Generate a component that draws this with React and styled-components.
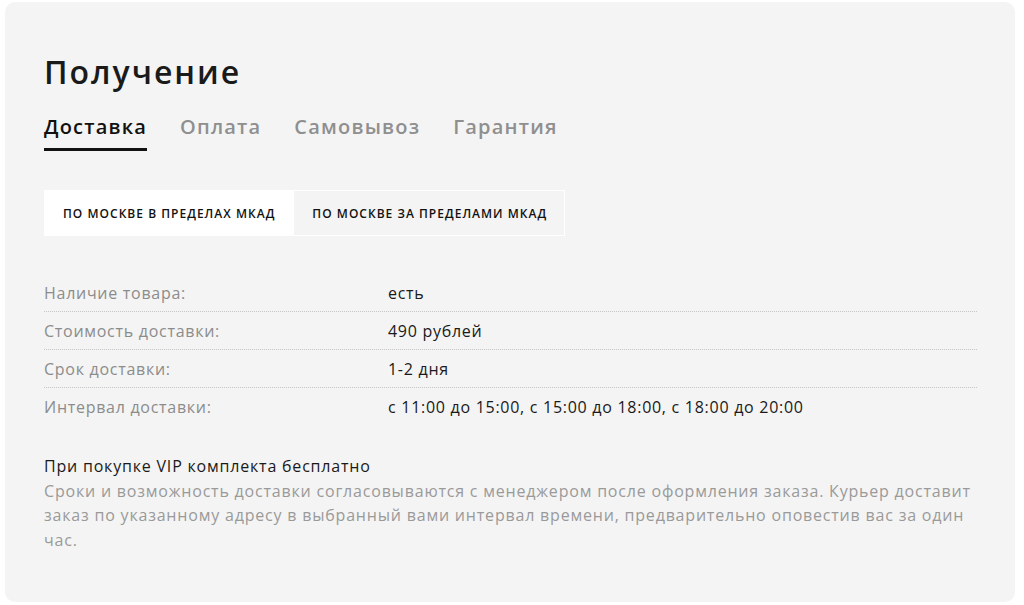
import React, { useState } from "react";
import styled, { createGlobalStyle } from "styled-components";

const Global = createGlobalStyle`
  html, body { margin: 0; padding: 0; background: #fff; }
  body { font-family: "Open Sans", "Noto Sans", sans-serif; -webkit-font-smoothing: antialiased; }
  * { box-sizing: border-box; }
`;

const Page = styled.div`
  padding: 2px 9px 3px 5px;
`;

const Card = styled.section`
  background: #f4f4f4;
  border-radius: 10px;
  height: 600px;
  padding: 44px 38px 0 39px;
`;

const Title = styled.h2`
  margin: 0;
  font-size: 32px;
  font-weight: 600;
  line-height: 52px;
  color: #1a1a1a;
  letter-spacing: 2px;
`;

const Tabs = styled.nav`
  display: flex;
  gap: 33px;
  margin-top: 15px;
`;

const Tab = styled.button`
  border: 0;
  background: none;
  padding: 0 0 7px;
  font-family: inherit;
  font-size: 20px;
  font-weight: 600;
  line-height: 28px;
  letter-spacing: 1.2px;
  color: ${(p) => (p.$active ? "#111" : "#8f8f8f")};
  border-bottom: 3px solid ${(p) => (p.$active ? "#111" : "transparent")};
  cursor: pointer;
`;

const Zones = styled.div`
  display: flex;
  margin-top: 39px;
`;

const Zone = styled.button`
  height: 46px;
  padding: 0 17px 0 18px;
  border: 1px solid #fff;
  background: ${(p) => (p.$active ? "#fff" : "transparent")};
  font-family: inherit;
  font-size: 12px;
  font-weight: 600;
  letter-spacing: 1.02px;
  text-transform: uppercase;
  color: #111;
  cursor: pointer;
`;

const Table = styled.div`
  margin-top: 38px;
`;

const Row = styled.div`
  display: grid;
  grid-template-columns: 344px 1fr;
  height: 38px;
  align-items: center;
  font-size: 16px;
  line-height: 22px;
  letter-spacing: 0.72px;
  border-bottom: 1px dotted ${(p) => (p.$last ? "transparent" : "#c6c6c6")};
`;

const Label = styled.span`
  color: #8c8c8c;
`;

const Value = styled.span`
  color: #1a1a1a;
`;

const Note = styled.div`
  margin-top: 28px;
  font-size: 16px;
  line-height: 24.5px;
  letter-spacing: 0.8px;
`;

const NoteTitle = styled.div`
  color: #1a1a1a;
`;

const NoteText = styled.p`
  margin: 0;
  color: #9a9a9a;
`;

const rows = [
  ["Наличие товара:", "есть"],
  ["Стоимость доставки:", "490 рублей"],
  ["Срок доставки:", "1-2 дня"],
  ["Интервал доставки:", "с 11:00 до 15:00, с 15:00 до 18:00, с 18:00 до 20:00"],
];

export default function App() {
  const [tab, setTab] = useState(0);
  const [zone, setZone] = useState(0);
  const tabs = ["Доставка", "Оплата", "Самовывоз", "Гарантия"];
  const zones = ["По Москве в пределах МКАД", "По Москве за пределами МКАД"];
  return (
    <Page>
      <Global />
      <Card>
        <Title>Получение</Title>
        <Tabs>
          {tabs.map((t, i) => (
            <Tab key={t} $active={i === tab} onClick={() => setTab(i)}>
              {t}
            </Tab>
          ))}
        </Tabs>
        <Zones>
          {zones.map((z, i) => (
            <Zone key={z} $active={i === zone} onClick={() => setZone(i)}>
              {z}
            </Zone>
          ))}
        </Zones>
        <Table>
          {rows.map(([l, v], i) => (
            <Row key={l} $last={i === rows.length - 1}>
              <Label>{l}</Label>
              <Value>{v}</Value>
            </Row>
          ))}
        </Table>
        <Note>
          <NoteTitle>При покупке VIP комплекта бесплатно</NoteTitle>
          <NoteText>
            Сроки и возможность доставки согласовываются с менеджером после оформления заказа. Курьер доставит
            заказ по указанному адресу в выбранный вами интервал времени, предварительно оповестив вас за один
            час.
          </NoteText>
        </Note>
      </Card>
    </Page>
  );
}
